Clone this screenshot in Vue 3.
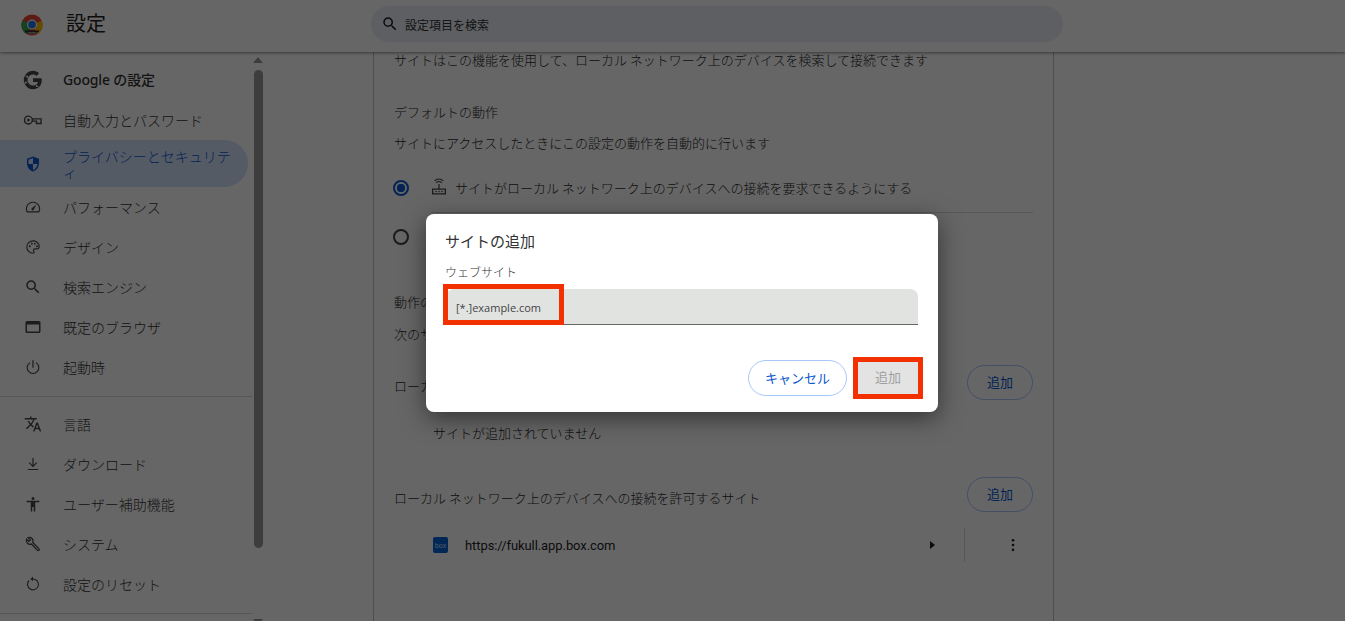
<template>
  <div class="page">
    <header class="topbar">
      <div class="brand">
        <svg class="logo" viewBox="0 0 24 24">
          <circle cx="12" cy="12" r="11.5" fill="#ea4335" />
          <path d="M12 12 L1.6 7 A11.5 11.5 0 0 0 6 22 Z" fill="#34a853" />
          <path d="M12 12 L22.4 7 A11.5 11.5 0 0 1 18 22 Z" fill="#fbbc04" />
          <path d="M3.5 18h17A11.5 11.5 0 0 1 3.5 18z" fill="#222" />
          <rect x="7.5" y="19.5" width="9" height="2" fill="#999" />
          <circle cx="12" cy="11.5" r="5.4" fill="#fff" />
          <circle cx="12" cy="11.5" r="4.2" fill="#1a73e8" />
        </svg>
        <h1 class="title">設定</h1>
      </div>
      <div class="search">
        <svg class="search-icon" viewBox="0 0 24 24"><path :d="icons.search" /></svg>
        <span>設定項目を検索</span>
      </div>
    </header>

    <div class="body">
      <nav class="sidebar">
        <div v-for="(group, g) in navGroups" :key="g" class="nav-group">
          <div
            v-for="item in group"
            :key="item.label"
            class="nav-item"
            :class="{ active: item.active }"
          >
            <svg class="nav-icon" :class="{ outline: item.outline, big: item.big }" viewBox="0 0 24 24">
              <path :d="item.icon" fill-rule="evenodd" />
            </svg>
            <span class="nav-label" :class="{ strong: item.strong }">{{ item.label }}</span>
          </div>
        </div>
      </nav>

      <div class="scrollbar">
        <div class="arrow up"></div>
        <div class="thumb"></div>
        <div class="arrow down"></div>
      </div>

      <main class="content">
        <section class="card">
          <p class="line intro">サイトはこの機能を使用して、ローカル ネットワーク上のデバイスを検索して接続できます</p>
          <p class="line heading">デフォルトの動作</p>
          <p class="line sub">サイトにアクセスしたときにこの設定の動作を自動的に行います</p>

          <div class="radio-row first">
            <span class="radio on"></span>
            <svg class="router" viewBox="0 0 16 18">
              <path d="M1 10.5h14v6H1z M2.3 11.8v3.4h11.400v-3.400z" fill-rule="evenodd" />
              <path d="M7.4 6h1.2v5H7.4z" />
              <circle cx="5" cy="13.5" r=".8" /><circle cx="8" cy="13.5" r=".8" /><circle cx="11" cy="13.5" r=".8" />
              <path d="M5.2 4.800a4 4 0 0 1 5.600 0M3.600 2.800a6.200 6.200 0 0 1 8.800 0" fill="none" stroke="currentColor" stroke-width="1.1" />
            </svg>
            <span>サイトがローカル ネットワーク上のデバイスへの接続を要求できるようにする</span>
          </div>
          <div class="radio-row second">
            <span class="radio"></span>
          </div>

          <p class="line custom">動作の</p>
          <p class="line custom-sub">次のサ</p>

          <div class="site-head deny">
            <span>ローカ</span>
            <button class="add-btn">追加</button>
          </div>
          <p class="empty">サイトが追加されていません</p>

          <div class="site-head allow">
            <span>ローカル ネットワーク上のデバイスへの接続を許可するサイト</span>
            <button class="add-btn">追加</button>
          </div>
          <div class="site-row">
            <span class="favicon">box</span>
            <span class="url">https://fukull.app.box.com</span>
            <span class="caret"></span>
            <span class="sep"></span>
            <svg class="more" viewBox="0 0 4 16">
              <circle cx="2" cy="2.500" r="1.500" /><circle cx="2" cy="8" r="1.500" /><circle cx="2" cy="13.500" r="1.500" />
            </svg>
          </div>
        </section>
      </main>
    </div>

    <div class="scrim"></div>

    <div class="dialog">
      <h2 class="dialog-title">サイトの追加</h2>
      <label class="field-label">ウェブサイト</label>
      <div class="field">
        <span class="placeholder">[*.]example.com</span>
        <span class="mark mark-field"></span>
      </div>
      <div class="actions">
        <button class="cancel">キャンセル</button>
        <div class="confirm-wrap">
          <button class="confirm" disabled>追加</button>
          <span class="mark mark-button"></span>
        </div>
      </div>
    </div>
  </div>
</template>

<script setup>
const icons = {
  search: 'M15.5 14h-.79l-.28-.27A6.47 6.47 0 0 0 16 9.5 6.5 6.5 0 1 0 9.5 16c1.61 0 3.09-.59 4.23-1.57l.27.28v.79l5 4.99L20.49 19l-4.99-5zm-6 0C7.01 14 5 11.99 5 9.5S7.01 5 9.5 5 14 7.01 14 9.5 11.99 14 9.5 14z',
  google: 'M21.6 12.2c0-.7-.1-1.4-.2-2H12v3.900h5.400c-.2 1.200-.9 2.300-2 3v2.500h3.200c1.900-1.700 3-4.300 3-7.400zM12 22c2.700 0 5-.9 6.600-2.400l-3.200-2.500c-.9.6-2 1-3.400 1-2.600 0-4.800-1.800-5.600-4.100H3.100v2.600A10 10 0 0 0 12 22zM6.400 14c-.4-1.300-.4-2.700 0-4V7.400H3.100a10 10 0 0 0 0 9.200zM12 6c1.500 0 2.800.5 3.800 1.500l2.900-2.900A10 10 0 0 0 3.100 7.400L6.400 10C7.200 7.700 9.400 6 12 6z',
  key: 'M7 7a5 5 0 1 0 4.600 7H15v2.500h6.500V10H11.600A5 5 0 0 0 7 7zM7 8.500a3.500 3.500 0 1 1 0 7 3.500 3.500 0 0 1 0-7zM7 10.500a1.500 1.500 0 1 0 0 3 1.500 1.500 0 0 0 0-3zM12.300 11.500H20V15h-3.500v-2.500h-4.200z',
  shield: 'M12 2 4 5v6c0 5 3.400 9.700 8 11 4.600-1.300 8-6 8-11V5zm0 2v8h6c-.5 3.700-2.900 7-6 8v-8H6V6.300z',
  speed: 'M12 5a9.500 9.500 0 0 0-8.200 14.300h16.400A9.500 9.500 0 0 0 12 5zm-7.300 12.800A8 8 0 0 1 12 6.500a8 8 0 0 1 7.300 11.300zM16.500 8.500l-5.700 4.700a1.700 1.700 0 1 0 2.400 2.200z',
  palette: 'M12 3a9 9 0 0 0 0 18c1.400 0 2.200-1 2.200-2 0-.6-.3-1-.5-1.400-.2-.3-.4-.6-.4-1 0-.8.6-1.400 1.400-1.400H17a4 4 0 0 0 4-4c0-4.700-4-8.200-9-8.200zm0 1.500c4.100 0 7.500 2.800 7.500 6.700a2.500 2.500 0 0 1-2.500 2.500h-2.300a2.900 2.900 0 0 0-2.900 2.900c0 .8.300 1.400.6 1.800.2.300.3.500.3.600 0 .3-.3.500-.7.500a7.500 7.500 0 0 1 0-15zM6.500 11a1.300 1.300 0 1 0 2.600 0 1.300 1.300 0 0 0-2.600 0zm2.700-3.500a1.300 1.300 0 1 0 2.600 0 1.300 1.300 0 0 0-2.600 0zm4 0a1.300 1.300 0 1 0 2.600 0 1.300 1.300 0 0 0-2.600 0zm2.800 3.500a1.300 1.300 0 1 0 2.600 0 1.300 1.300 0 0 0-2.600 0z',
  browser: 'M4 4h16a2 2 0 0 1 2 2v12a2 2 0 0 1-2 2H4a2 2 0 0 1-2-2V6a2 2 0 0 1 2-2zm0 4.500V18h16V8.500z',
  power: 'M11.200 3h1.600v10h-1.600zM16.500 5.500l-1 1.300a7 7 0 1 1-7 0l-1-1.300a8.500 8.500 0 1 0 9 0z',
  language: 'M12.900 15.100l-2.600-2.500A17.500 17.500 0 0 0 14 6h3V4h-7V2H8v2H1v2h11.200a15.700 15.700 0 0 1-3.200 5.400A15.600 15.600 0 0 1 6.700 8h-2c.7 1.600 1.700 3.200 3 4.600l-5.100 5L4 19l5-5 3.100 3.100zM18.500 10h-2L12 22h2l1.100-3h4.800l1.100 3h2zm-2.600 7 1.600-4.300 1.600 4.300z',
  download: 'M11.200 4h1.600v9.200l3.600-3.600 1.100 1.100L12 16.200l-5.500-5.500 1.100-1.100 3.600 3.600zM5 18.500h14V20H5z',
  person: 'M12 2.500a2 2 0 1 1 0 4 2 2 0 0 1 0-4zM20.500 7.500v2H15V22h-2v-6h-2v6H9V9.500H3.500v-2z',
  wrench: 'M5.500 3.500 8.500 6.500 6.500 8.500 3.500 5.500A5 5 0 0 0 10 12l8 8.500a1.200 1.200 0 0 0 1.700 0l.3-.3a1.200 1.200 0 0 0 0-1.700L11.800 10A5 5 0 0 0 5.500 3.500z',
  reset: 'M12 4.500V2L8.500 5.200 12 8.400V6a6.500 6.500 0 1 1-4.600 1.900L6.300 6.800A8 8 0 1 0 12 4.500z'
}

const navGroups = [
  [
    { label: 'Google の設定', icon: icons.google, strong: true, big: true },
    { label: '自動入力とパスワード', icon: icons.key, big: true },
    { label: 'プライバシーとセキュリティ', icon: icons.shield, active: true },
    { label: 'パフォーマンス', icon: icons.speed },
    { label: 'デザイン', icon: icons.palette },
    { label: '検索エンジン', icon: icons.search },
    { label: '既定のブラウザ', icon: icons.browser },
    { label: '起動時', icon: icons.power }
  ],
  [
    { label: '言語', icon: icons.language },
    { label: 'ダウンロード', icon: icons.download },
    { label: 'ユーザー補助機能', icon: icons.person },
    { label: 'システム', icon: icons.wrench, outline: true },
    { label: '設定のリセット', icon: icons.reset }
  ]
]
</script>

<style>
html,
body {
  margin: 0;
  overflow: hidden;
}
</style>

<style scoped>
.page {
  position: relative;
  display: flex;
  flex-direction: column;
  width: 1345px;
  height: 621px;
  overflow: hidden;
  background: #fff;
  color: #1f1f1f;
  font-family: "Noto Sans CJK JP", "Noto Sans", sans-serif;
  font-size: 14px;
}

/* top bar */
.topbar {
  position: relative;
  z-index: 2;
  flex: none;
  display: flex;
  align-items: center;
  height: 52px;
  padding-bottom: 4px;
  box-sizing: border-box;
  box-shadow: 0 1px 3px rgba(0, 0, 0, 0.45);
  background: #fff;
}
.brand {
  display: flex;
  align-items: center;
  width: 371px;
  padding-left: 21px;
  box-sizing: border-box;
}
.logo {
  width: 22px;
  height: 22px;
  margin-top: 1px;
}
.title {
  margin: -2px 0 0 23px;
  font-size: 20px;
  font-weight: 400;
  line-height: 24px;
}
.search {
  display: flex;
  align-items: center;
  gap: 6px;
  width: 692px;
  height: 36px;
  padding-left: 10px;
  box-sizing: border-box;
  border-radius: 18px;
  background: #e9eef6;
  font-size: 12px;
  color: #333;
}
.search-icon {
  width: 18px;
  height: 18px;
  fill: #1f1f1f;
}

/* sidebar */
.body {
  flex: 1;
  display: flex;
  min-height: 0;
}
.sidebar {
  flex: none;
  width: 252px;
  padding-top: 8px;
  box-sizing: border-box;
}
.nav-group {
  padding-bottom: 9px;
  border-bottom: 1px solid #d8d8d8;
  margin-bottom: 8px;
}
.nav-group + .nav-group {
  margin-top: -1px;
}
.nav-item {
  display: flex;
  align-items: center;
  width: 248px;
  min-height: 40px;
  box-sizing: border-box;
  padding-left: 24px;
  color: #333;
  line-height: 16px;
}
.nav-item.active {
  min-height: 47px;
  border-radius: 0 24px 24px 0;
  background: #d3e3fd;
  color: #0b57d0;
}
.nav-icon {
  flex: none;
  width: 18px;
  height: 18px;
  margin-right: 21px;
  fill: #474747;
}
.nav-icon.big {
  width: 22px;
  height: 22px;
  margin-left: -2px;
  margin-right: 19px;
}
.nav-icon.outline {
  fill: none;
  stroke: #474747;
  stroke-width: 1.8;
}
.active .nav-icon {
  fill: #0b57d0;
}
.nav-label {
  width: 172px;
  font-weight: 300;
  word-break: break-all;
}
.nav-label.strong {
  font-family: "Noto Sans", "Noto Sans CJK JP", sans-serif;
  font-weight: 500;
  letter-spacing: -0.15px;
}

/* scrollbar */
.scrollbar {
  flex: none;
  display: flex;
  flex-direction: column;
  align-items: center;
  width: 10px;
  margin-left: 1px;
  padding-top: 5px;
  box-sizing: border-box;
}
.arrow {
  flex: none;
  width: 0;
  height: 0;
  border-left: 5px solid transparent;
  border-right: 5px solid transparent;
}
.arrow.up {
  border-bottom: 6px solid #9a9a9a;
}
.arrow.down {
  margin-top: 71px;
  border-top: 6px solid #9a9a9a;
}
.thumb {
  flex: none;
  width: 9px;
  height: 478px;
  margin-top: 7px;
  border-radius: 5px;
  background: #9a9a9a;
}

/* main card */
.content {
  flex: 1;
  min-width: 0;
  padding-left: 110px;
}
.card {
  width: 681px;
  height: 100%;
  box-sizing: border-box;
  padding: 0 20px;
  border-left: 1px solid #c4c4c4;
  border-right: 1px solid #c4c4c4;
  background: #fff;
  font-size: 13px;
  font-weight: 300;
}
.line {
  margin: 0;
  line-height: 20px;
}
.intro {
  line-height: 16px;
}
.heading {
  margin-top: 34px;
}
.sub {
  margin-top: 11px;
}
.radio-row {
  display: flex;
  align-items: center;
  height: 49px;
  white-space: nowrap;
}
.radio-row.first {
  margin-top: 10px;
}
.radio-row.second {
  position: relative;
}
.radio-row.second::before {
  content: "";
  position: absolute;
  top: 0;
  left: 37px;
  right: 0;
  border-top: 1px solid #d8d8d8;
}
.radio {
  flex: none;
  width: 16px;
  height: 16px;
  margin-left: -1px;
  margin-right: 22px;
  box-sizing: border-box;
  border: 2px solid #444;
  border-radius: 50%;
}
.radio.on {
  border-color: #0b57d0;
  background: radial-gradient(circle, #0b57d0 0 4px, transparent 4.5px);
}
.router {
  flex: none;
  width: 16px;
  height: 18px;
  margin-right: 8px;
  margin-top: -2px;
  fill: #474747;
  color: #474747;
}
.custom {
  margin-top: 31px;
}
.custom-sub {
  margin-top: 12px;
}
.site-head {
  display: flex;
  align-items: flex-end;
  justify-content: space-between;
}
.site-head span {
  line-height: 20px;
  margin-bottom: 4px;
}
.deny {
  margin-top: 21px;
}
.allow {
  margin-top: 34px;
}
.add-btn {
  width: 66px;
  height: 35px;
  padding: 0 0 2px;
  border: 1px solid #a8c7fa;
  border-radius: 18px;
  background: transparent;
  color: #0b57d0;
  font: inherit;
  font-size: 13px;
  font-weight: 400;
}
.empty {
  margin: 23px 0 0 39px;
  line-height: 20px;
}
.site-row {
  display: flex;
  align-items: center;
  height: 34px;
  margin-top: 16px;
  padding-left: 39px;
}
.favicon {
  flex: none;
  display: flex;
  align-items: center;
  justify-content: center;
  width: 15px;
  height: 16px;
  border-radius: 2px;
  background: #0061d5;
  color: #cfe2ff;
  font: 400 7px "Liberation Sans", sans-serif;
}
.url {
  flex: none;
  width: 465px;
  margin-left: 17px;
  font-family: Roboto, "Noto Sans", sans-serif;
  font-size: 13px;
  font-weight: 400;
  letter-spacing: -0.08px;
  color: #1f1f1f;
}
.caret {
  flex: none;
  width: 0;
  height: 0;
  border-top: 4px solid transparent;
  border-bottom: 4px solid transparent;
  border-left: 5px solid #1f1f1f;
}
.sep {
  flex: none;
  width: 1px;
  height: 34px;
  margin-left: 29px;
  background: #d8d8d8;
}
.more {
  flex: none;
  width: 4px;
  height: 14px;
  margin-left: 46px;
  fill: #1f1f1f;
}

/* dim layer and dialog */
.scrim {
  position: absolute;
  inset: 0;
  z-index: 3;
  background: rgba(0, 0, 0, 0.6);
}
.dialog {
  position: absolute;
  z-index: 4;
  left: 426px;
  top: 214px;
  width: 512px;
  height: 198px;
  box-sizing: border-box;
  padding: 16px 20px 0;
  border-radius: 8px;
  background: #fff;
  box-shadow: 0 6px 24px rgba(0, 0, 0, 0.5);
}
.dialog-title {
  margin: 0 0 0 -1px;
  font-size: 15px;
  font-weight: 400;
  line-height: 22px;
  color: #333;
}
.field-label {
  display: block;
  margin: 12px 0 0 -1px;
  font-size: 12px;
  line-height: 16px;
  font-weight: 300;
  color: #333;
}
.field {
  position: relative;
  display: flex;
  align-items: center;
  height: 36px;
  margin-top: 9px;
  padding: 2px 10px 0;
  box-sizing: border-box;
  border-bottom: 1px solid #666;
  border-radius: 8px 8px 0 0;
  background: #e1e3e1;
}
.placeholder {
  font-family: "Open Sans", "Noto Sans", sans-serif;
  font-size: 11px;
  color: #444;
}
.mark {
  position: absolute;
  box-sizing: border-box;
  border: 5px solid #f33000;
  pointer-events: none;
}
.mark-field {
  left: -3px;
  top: -5px;
  width: 121px;
  height: 41px;
}
.actions {
  display: flex;
  justify-content: flex-end;
  align-items: center;
  gap: 10px;
  margin-top: 35px;
}
.cancel {
  width: 99px;
  height: 36px;
  padding: 0 0 2px;
  border: 1px solid #a8c7fa;
  border-radius: 18px;
  background: #fff;
  color: #0b57d0;
  font: inherit;
  font-size: 13px;
}
.confirm-wrap {
  position: relative;
  display: flex;
  margin-right: -1px;
}
.confirm {
  width: 62px;
  height: 34px;
  padding: 0 0 3px;
  border: 0;
  border-radius: 4px;
  background: #e3e3e3;
  color: #a0a0a0;
  font: inherit;
  font-size: 13px;
}
.mark-button {
  left: -4px;
  top: -4px;
  width: 70px;
  height: 42px;
}
</style>
